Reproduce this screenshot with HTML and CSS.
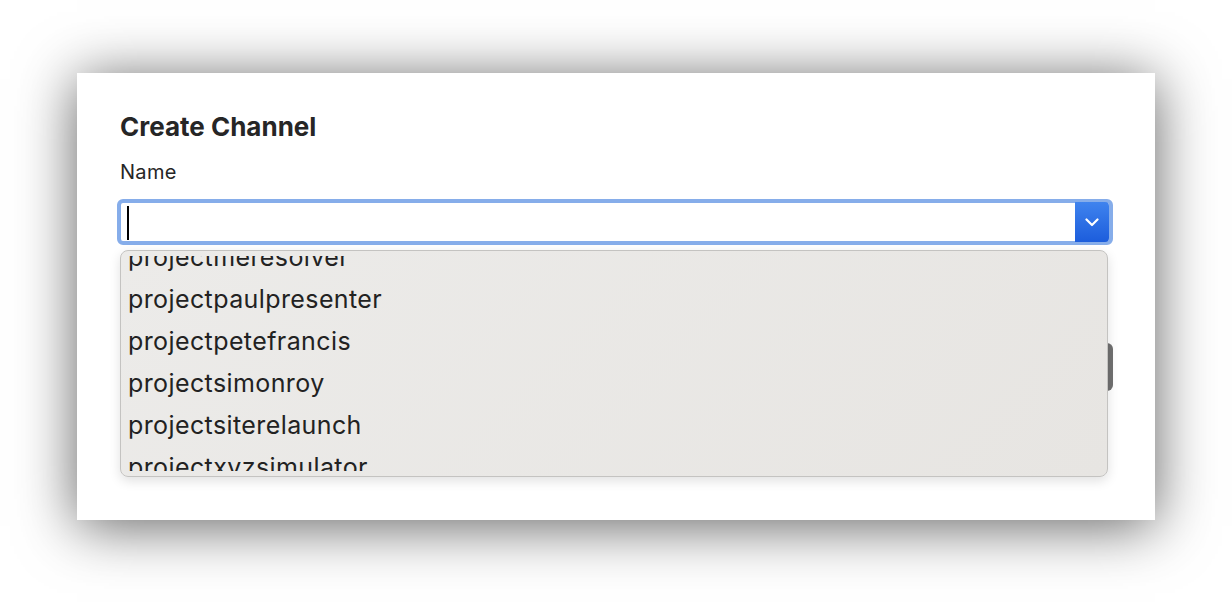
FILE: index.html
```html
<!DOCTYPE html>
<html>
<head>
<meta charset="utf-8">
<link rel="stylesheet" href="styles.css">
</head>
<body>
<div class="modal">
  <h1 class="title">Create Channel</h1>
  <label class="label">Name</label>
  <div class="combo">
    <div class="field">
      <span class="caret"></span>
      <span class="btn-arrow">
        <svg width="14" height="9" viewBox="0 0 14 9"><path d="M1.5 1.5 L7 7 L12.5 1.5" fill="none" stroke="#fff" stroke-width="2.2" stroke-linecap="round" stroke-linejoin="round"/></svg>
      </span>
    </div>
    <div class="dropdown">
      <div class="scroll">
        <div class="list">
          <div class="item">projectmeresolver</div>
          <div class="item">projectpaulpresenter</div>
          <div class="item">projectpetefrancis</div>
          <div class="item">projectsimonroy</div>
          <div class="item">projectsiterelaunch</div>
          <div class="item">projectxyzsimulator</div>
        </div>
      </div>
    </div>
  </div>
  <div class="footer">
    <div class="action"></div>
  </div>
</div>
</body>
</html>
```

FILE: styles.css
```css
html, body {
  margin: 0;
  padding: 0;
  background: #ffffff;
  width: 1232px;
  height: 602px;
  overflow: hidden;
  font-family: Inter, "Noto Sans", "Liberation Sans", sans-serif;
  color: #262626;
}
.modal {
  margin: 73px 0 0 77px;
  width: 1078px;
  height: 447px;
  box-sizing: border-box;
  padding: 0 43px 0 43px;
  background: #ffffff;
  box-shadow: 0 6px 55px rgba(0, 0, 0, 0.62);
  display: flex;
  flex-direction: column;
}
.title {
  margin: 37px 0 0 0;
  font-size: 26px;
  line-height: 34px;
  font-weight: 700;
  color: #262626;
  letter-spacing: 0;
}
.label {
  display: block;
  margin-top: 16px;
  font-size: 20px;
  line-height: 24px;
  color: #262626;
  letter-spacing: 0.3px;
}
.combo {
  position: relative;
  margin: 15px 0 0 -3px;
  width: 996px;
}
.field {
  height: 38px;
  border: 4px solid #86adea;
  border-radius: 6px;
  background: #ffffff;
  display: flex;
  align-items: stretch;
  justify-content: space-between;
}
.caret {
  width: 2px;
  background: #000;
  margin: 3px 0 1px 6px;
}
.btn-arrow {
  width: 34px;
  margin: -1px 0 -1px 0;
  border-radius: 0 4px 4px 0;
  background: linear-gradient(#3f83ee, #1c5ddc);
  display: flex;
  align-items: center;
  justify-content: center;
}
.dropdown {
  position: absolute;
  left: 3px;
  top: 51px;
  width: 986px;
  height: 225px;
  box-sizing: content-box;
  padding: 0;
  background: linear-gradient(135deg, #ecebe9, #e7e5e2);
  border: 1px solid #c4c3c1;
  border-radius: 8px;
  box-shadow: 0 4px 12px rgba(0, 0, 0, 0.12);
  overflow: hidden;
  z-index: 2;
  display: flex;
  flex-direction: column;
  justify-content: center;
}
.scroll {
  height: 215px;
  overflow: hidden;
}
.list {
  margin-top: -20px;
}
.item {
  height: 42px;
  line-height: 42px;
  padding-left: 7px;
  font-size: 25px;
  color: #222222;
  letter-spacing: 0.4px;
}
.footer {
  display: flex;
  justify-content: flex-end;
  margin-top: 98px;
  margin-right: -1px;
}
.action {
  width: 60px;
  height: 48px;
  border-radius: 6px;
  background: #707070;
}
```
